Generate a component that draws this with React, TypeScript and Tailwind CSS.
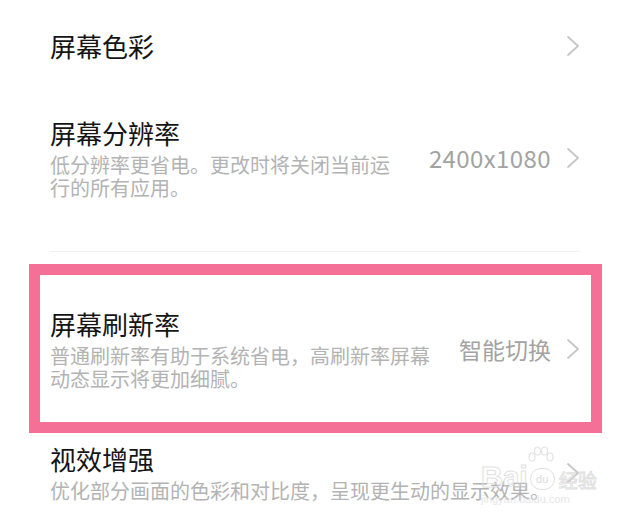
import React from 'react';

const Chevron = () => (
  <svg width="14" height="22" viewBox="0 0 14 22" fill="none" className="shrink-0">
    <path d="M2 2 L12 11 L2 20" stroke="#c6c6c6" strokeWidth="1.8" strokeLinecap="round" strokeLinejoin="round" />
  </svg>
);

type RowProps = {
  title: string;
  desc?: string;
  value?: string;
  valueClass?: string;
};

const Row = ({ title, desc, value, valueClass }: RowProps) => (
  <div className="flex items-center gap-[15px]">
    <div className="flex-1 min-w-0">
      <div className="text-[26px] leading-[32px] text-[#151515]">{title}</div>
      {desc && <div className="mt-[4px] text-[20px] leading-[23px] text-[#b3b3b3]">{desc}</div>}
    </div>
    {value && (
      <span className={`ml-[13px] leading-[30px] text-[#a3a3a3] whitespace-nowrap ${valueClass ?? 'text-[24px]'}`}>
        {value}
      </span>
    )}
    <Chevron />
  </div>
);

const App = () => {
  return (
    <div
      className="relative w-[627px] h-[520px] overflow-hidden bg-white"
      style={{ fontFamily: '"Noto Sans CJK SC", "Noto Sans", sans-serif' }}
    >
      <div className="pt-[30px] pl-[50px] pr-[47px]">
        <Row title="屏幕色彩" />
      </div>

      <div className="mt-[55px] pl-[50px] pr-[47px]">
        <Row
          title="屏幕分辨率"
          desc="低分辨率更省电。更改时将关闭当前运行的所有应用。"
          value="2400x1080"
          valueClass="text-[24px] tracking-[0.4px]"
        />
      </div>

      <div className="mt-[52px] ml-[50px] mr-[47px] h-px bg-[#f1f1f1]" />

      <div className="mt-[12px] ml-[29px] mr-[25px] border-[11px] border-[#f57096] pt-[33px] pb-[32px] pl-[10px] pr-[11px]">
        <Row
          title="屏幕刷新率"
          desc="普通刷新率有助于系统省电，高刷新率屏幕动态显示将更加细腻。"
          value="智能切换"
          valueClass="text-[23px]"
        />
      </div>

      <div className="mt-[10px] pl-[50px] pr-[47px]">
        <Row title="视效增强" desc="优化部分画面的色彩和对比度，呈现更生动的显示效果。" />
      </div>

      {/* baidu jingyan watermark */}
      <div className="absolute left-[481px] top-[446px] pointer-events-none opacity-80">
        <svg width="28" height="26" viewBox="0 0 28 26" fill="none" className="ml-[46px]">
          <g stroke="#dedede" strokeWidth="1.2">
            <ellipse cx="5" cy="11" rx="3" ry="4" />
            <ellipse cx="10.5" cy="5" rx="3" ry="4" />
            <ellipse cx="17.5" cy="5" rx="3" ry="4" />
            <ellipse cx="23" cy="11" rx="3" ry="4" />
          </g>
        </svg>
        <div className="-mt-[10px] flex items-end gap-[2px]">
          <span
            className="text-[30px] leading-[30px] font-bold text-transparent"
            style={{ WebkitTextStroke: '1px #dadada', fontFamily: '"Liberation Sans", sans-serif' }}
          >
            Bai
          </span>
          <span
            className="mb-[2px] flex h-[22px] w-[25px] items-center justify-center rounded-full border border-[#dadada] text-[11px] leading-none text-[#d4d4d4]"
            style={{ fontFamily: '"Liberation Sans", sans-serif' }}
          >
            du
          </span>
          <span className="ml-[2px] text-[19px] leading-[24px] text-transparent" style={{ WebkitTextStroke: '1px #dadada' }}>
            经验
          </span>
        </div>
        <span className="block text-[11px] leading-[14px] text-[#e2e2e2]" style={{ fontFamily: '"Liberation Sans", sans-serif' }}>
          jingyan.baidu.com
        </span>
      </div>
    </div>
  );
};

export default App;
